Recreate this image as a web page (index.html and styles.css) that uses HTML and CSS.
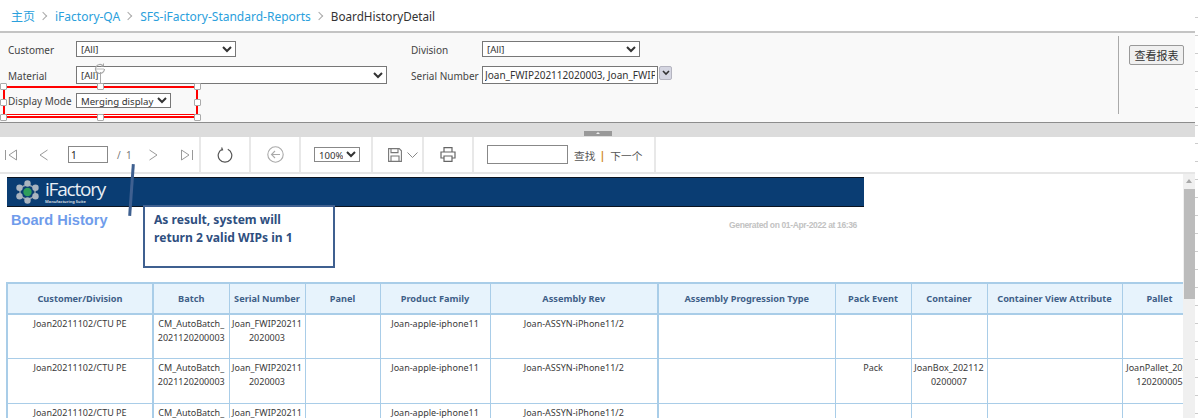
FILE: index.html
```html
<!DOCTYPE html>
<html lang="en">
<head>
    <meta charset="UTF-8">
    <meta name="viewport" content="width=device-width, initial-scale=1.0">
    <title>BoardHistoryDetail</title>
    <link rel="stylesheet" href="styles.css">
</head>
<body>
<div class="page">
    <nav class="breadcrumb">
        <a>主页</a><span class="crumb-sep"></span>
        <a>iFactory-QA</a><span class="crumb-sep"></span>
        <a>SFS-iFactory-Standard-Reports</a><span class="crumb-sep"></span>
        <span class="crumb-current">BoardHistoryDetail</span>
    </nav>

    <section class="params">
        <div class="param-grid">
            <label>Customer</label>
            <select class="sel-customer"><option>[All]</option></select>
            <label>Division</label>
            <select class="sel-division"><option>[All]</option></select>

            <label>Material</label>
            <select class="sel-material"><option>[All]</option></select>
            <label>Serial Number</label>
            <div class="serial">
                <input class="serial-input" type="text" readonly value="Joan_FWIP202112020003, Joan_FWIP202112020003">
                <span class="serial-btn">
                    <svg width="8" height="6" viewBox="0 0 8 6"><path d="M1 1l3 3 3-3" fill="none" stroke="#333" stroke-width="1.6"/></svg>
                </span>
            </div>

            <label>Display Mode</label>
            <select class="sel-mode"><option>Merging display</option></select>
        </div>
        <div class="view-area">
            <button class="view-btn" type="button">查看报表</button>
        </div>

        <!-- selected shape drawn over the screenshot -->
        <div class="select-box">
            <i class="handle h-tl"></i><i class="handle h-tm"></i><i class="handle h-tr"></i>
            <i class="handle h-ml"></i><i class="handle h-mr"></i>
            <i class="handle h-bl"></i><i class="handle h-bm"></i><i class="handle h-br"></i>
        </div>
        <svg class="rotate-handle" width="14" height="14" viewBox="0 0 14 14">
            <path d="M11.5 7a4.5 4.5 0 1 1-1.3-3.2" fill="none" stroke="#a8a8a8" stroke-width="1.2"/>
            <path d="M3 7h8" stroke="#bbb"/>
            <path d="M10.5 1.5v2.6H8" fill="none" stroke="#a8a8a8"/>
        </svg>
    </section>

    <div class="splitter"><span class="splitter-grip"></span></div>

    <div class="toolbar">
        <div class="tool-group tg-pages">
            <svg width="12" height="12" viewBox="0 0 12 12"><path d="M.5 1v10M11.5 1L4 6l7.5 5z" fill="none" stroke="#999"/></svg>
            <svg class="ic-prev" width="9" height="12" viewBox="0 0 9 12"><path d="M8.5 1L1 6l7.5 5" fill="none" stroke="#999"/></svg>
            <input class="page-input" type="text" value="1">
            <span class="page-total">/&nbsp;&nbsp;1</span>
            <svg class="ic-next" width="9" height="12" viewBox="0 0 9 12"><path d="M.5 1L8 6l-7.5 5" fill="none" stroke="#999"/></svg>
            <svg class="ic-last" width="12" height="12" viewBox="0 0 12 12"><path d="M11.5 1v10M.5 1L8 6l-7.5 5z" fill="none" stroke="#999"/></svg>
        </div>
        <div class="tool-group tg-refresh">
            <svg width="16" height="16" viewBox="0 0 16 16"><path d="M5.2 2.2a6.8 6.8 0 1 0 5.6 0M4.6 .6l.9 2.2-2.3.5" fill="none" stroke="#555" stroke-width="1.2"/></svg>
        </div>
        <div class="tool-group tg-back">
            <svg width="17" height="17" viewBox="0 0 17 17"><circle cx="8.5" cy="8.5" r="7.7" fill="none" stroke="#aaa" stroke-width="1.1"/><path d="M13 8.5H4.5M8 5L4.5 8.5 8 12" fill="none" stroke="#aaa" stroke-width="1.1"/></svg>
        </div>
        <div class="tool-group tg-zoom">
            <select class="zoom-select"><option>100%</option></select>
        </div>
        <div class="tool-group tg-save">
            <svg width="14" height="14" viewBox="0 0 14 14"><path d="M.6.6h10.6l2.2 2.2v10.6H.6zM3 .6v4h7v-4M3 13.4V8h8v5.4" fill="none" stroke="#777" stroke-width="1.1"/></svg>
            <svg width="11" height="6" viewBox="0 0 11 6"><path d="M.5.5l5 5 5-5" fill="none" stroke="#888"/></svg>
        </div>
        <div class="tool-group tg-print">
            <svg width="16" height="15" viewBox="0 0 16 15"><path d="M4 5V.7h8V5M4 11H1V5h14v6h-3M4 9h8v5.3H4z" fill="none" stroke="#666" stroke-width="1.2"/></svg>
        </div>
        <div class="tool-group tg-find">
            <input class="find-input" type="text">
            <a class="find-link">查找</a>
            <span class="find-sep">|</span>
            <a class="find-link">下一个</a>
        </div>
    </div>

    <div class="report">
        <div class="report-body">
            <div class="banner">
                <svg class="logo-mark" width="23" height="24" viewBox="0 0 23 24">
                    <path d="M11.5 4L4 8v8l7.5 4 7.5-4V8z" fill="none" stroke="#8f9dab" stroke-width="1.5"/>
                    <g fill="#a9b4bf">
                        <circle cx="11.5" cy="3.5" r="3.2"/><circle cx="11.5" cy="20.5" r="3.2"/>
                        <circle cx="3.5" cy="7.8" r="3.2"/><circle cx="19.5" cy="7.8" r="3.2"/>
                        <circle cx="3.5" cy="16.2" r="3.2"/><circle cx="19.5" cy="16.2" r="3.2"/>
                    </g>
                    <circle cx="11.5" cy="12" r="4.2" fill="#2f9e5b"/>
                </svg>
                <div class="logo-text">
                    <span class="logo-name">iFactory</span>
                    <span class="logo-sub">Manufacturing Suite</span>
                </div>
            </div>
            <div class="title-row">
                <span class="report-title">Board History</span>
                <span class="generated">Generated on 01-Apr-2022 at 16:36</span>
            </div>
            <table class="history">
                <colgroup>
                    <col class="c1"><col class="c2"><col class="c3"><col class="c4"><col class="c5"><col class="c6">
                    <col class="c7"><col class="c8"><col class="c9"><col class="c10"><col class="c11">
                </colgroup>
                <thead>
                    <tr>
                        <th>Customer/Division</th><th>Batch</th><th>Serial Number</th><th>Panel</th>
                        <th>Product Family</th><th>Assembly Rev</th><th>Assembly Progression Type</th>
                        <th>Pack Event</th><th>Container</th><th>Container View Attribute</th><th>Pallet</th>
                    </tr>
                </thead>
                <tbody>
                    <tr>
                        <td>Joan20211102/CTU PE</td><td>CM_AutoBatch_<br>2021120200003</td><td>Joan_FWIP20211<br>2020003</td><td></td>
                        <td>Joan-apple-iphone11</td><td>Joan-ASSYN-iPhone11/2</td><td></td>
                        <td></td><td></td><td></td><td></td>
                    </tr>
                    <tr>
                        <td>Joan20211102/CTU PE</td><td>CM_AutoBatch_<br>2021120200003</td><td>Joan_FWIP20211<br>2020003</td><td></td>
                        <td>Joan-apple-iphone11</td><td>Joan-ASSYN-iPhone11/2</td><td></td>
                        <td>Pack</td><td>JoanBox_202112<br>0200007</td><td></td><td>JoanPallet_2021<br>120200005</td>
                    </tr>
                    <tr>
                        <td>Joan20211102/CTU PE</td><td>CM_AutoBatch_<br>2021120200003</td><td>Joan_FWIP20211<br>2020003</td><td></td>
                        <td>Joan-apple-iphone11</td><td>Joan-ASSYN-iPhone11/2</td><td></td>
                        <td></td><td></td><td></td><td></td>
                    </tr>
                </tbody>
            </table>
        </div>
        <div class="scrollbar">
            <span class="scroll-up"></span>
            <span class="scroll-thumb"></span>
        </div>
    </div>

    <!-- annotation drawn over the screenshot -->
    <span class="note-line"></span>
    <div class="note">As result, system will<br>return 2 valid WIPs in 1</div>
</div>
<div class="edge-ticks"></div>
</body>
</html>
```

FILE: styles.css
```css
* {
    box-sizing: border-box;
}

html, body {
    margin: 0;
    height: 418px;
    overflow: hidden;
    background-color: #fff;
}

body {
    display: flex;
    font-family: "Noto Sans", "Noto Sans CJK SC", sans-serif;
    color: #333;
}

.page {
    position: relative;
    width: 1195px;
    height: 418px;
    display: flex;
    flex-direction: column;
    overflow: hidden;
}

.edge-ticks {
    width: 3px;
    height: 418px;
    background: repeating-linear-gradient(to bottom, transparent 0, transparent 17px, #ccc 17px, #ccc 18px);
}

/* breadcrumb */
.breadcrumb {
    height: 33px;
    flex: none;
    display: flex;
    align-items: center;
    padding: 1px 0 0 11px;
    border-bottom: 2px solid #c4c4c4;
    font-size: 12px;
    background-color: #fff;
}

.breadcrumb a {
    color: #2aa0dc;
}

.crumb-sep {
    width: 6px;
    height: 6px;
    margin: 0 9px 0 5px;
    border-top: 1px solid #aaa;
    border-right: 1px solid #aaa;
    transform: rotate(45deg);
}

.crumb-current {
    color: #333;
    font-size: 11.7px;
}

/* parameter panel */
.params {
    position: relative;
    height: 90px;
    flex: none;
    display: flex;
    justify-content: space-between;
    background-color: #f9f9f9;
    border-bottom: 1px solid #8c8c8c;
    font-size: 10px;
}

.param-grid {
    display: grid;
    grid-template-columns: 68px 335px 71px 260px;
    grid-template-rows: 16px 18px 15px;
    row-gap: 9px;
    padding: 8px 0 0 8px;
    align-items: center;
    justify-items: start;
}

.param-grid label {
    padding-top: 1px;
    color: #444;
    white-space: nowrap;
}

.param-grid select {
    height: 100%;
    font-family: inherit;
    font-size: 9.6px;
    color: #333;
    background-color: #fff;
    border: 1px solid #777;
    border-radius: 0;
    padding: 0;
}

.param-grid .sel-mode {
    grid-row: 3;
    grid-column: 2;
}

.sel-customer { width: 160px; }
.sel-material { width: 311px; }
.sel-division { width: 158px; }
.sel-mode { width: 95px; }

.serial {
    display: flex;
    align-items: flex-start;
    height: 18px;
}

.serial-input {
    width: 176px;
    height: 18px;
    padding: 0 2px;
    font-family: inherit;
    font-size: 10px;
    color: #333;
    background-color: #fff;
    border: 1px solid #777;
    outline: none;
}

.serial-btn {
    width: 13px;
    height: 14px;
    margin-left: 1px;
    display: flex;
    align-items: center;
    justify-content: center;
    background-color: #d5d6e2;
    border: 1px solid #b5b5c0;
    border-radius: 2px;
}

.view-area {
    width: 77px;
    height: 78px;
    margin: 3px 0 0;
    padding: 9px 0 0 10px;
    border-left: 1px solid #aaa;
}

.view-btn {
    width: 55px;
    height: 20px;
    padding: 0;
    font-family: inherit;
    font-size: 11px;
    color: #333;
    background-color: #f0f0f0;
    border: 1px solid #999;
    border-radius: 2px;
}

/* red rectangle + its handles */
.select-box {
    position: absolute;
    left: 3px;
    top: 53px;
    width: 195px;
    height: 32px;
    border: 2px solid #f00;
    box-shadow: inset 0 -1px 0 #fff, inset 0 -2px 0 #f00;
}

.select-box::before {
    content: "";
    position: absolute;
    left: 95px;
    top: -16px;
    width: 1px;
    height: 12px;
    background-color: #aaa;
}

.handle {
    position: absolute;
    width: 7px;
    height: 7px;
    background-color: #fff;
    border: 1px solid #aaa;
    border-radius: 1px;
}

.h-tl { left: -5px; top: -5px; }
.h-tm { left: 92px; top: -5px; }
.h-tr { right: -5px; top: -5px; }
.h-ml { left: -5px; top: 11px; }
.h-mr { right: -5px; top: 11px; }
.h-bl { left: -5px; bottom: -5px; }
.h-bm { left: 92px; bottom: -5px; }
.h-br { right: -5px; bottom: -5px; }

.rotate-handle {
    position: absolute;
    left: 93px;
    top: 29px;
}

/* splitter */
.splitter {
    height: 14px;
    flex: none;
    display: flex;
    justify-content: center;
    align-items: flex-end;
    padding: 0 0 1px 0;
    background-color: #dcdcdc;
}

.splitter-grip {
    width: 28px;
    height: 5px;
    display: flex;
    justify-content: center;
    padding-top: 1px;
    background-color: #999;
}

.splitter-grip::after {
    content: "";
    border-left: 2px solid transparent;
    border-right: 2px solid transparent;
    border-bottom: 2px solid #eee;
    height: 0;
}

/* toolbar */
.toolbar {
    height: 37px;
    flex: none;
    display: flex;
    border-bottom: 2px solid #e6e6e6;
    background-color: #fff;
}

.tool-group {
    height: 35px;
    display: flex;
    align-items: center;
    border-right: 2px solid #e8e8e8;
}

.tg-pages { width: 201px; padding-left: 5px; }
.ic-prev { margin-left: 22px; }
.page-input {
    width: 40px;
    height: 17px;
    margin-left: 20px;
    padding: 0 2px;
    font-family: inherit;
    font-size: 10px;
    color: #222;
    border: 1px solid #888;
    outline: none;
}
.page-total {
    margin-left: 9px;
    font-size: 10px;
    color: #777;
    white-space: nowrap;
}
.ic-next { margin-left: 17px; }
.ic-last { margin-left: 23px; }

.tg-refresh { width: 50px; justify-content: center; }
.tg-back { width: 50px; justify-content: center; }
.tg-zoom { width: 72px; padding-left: 13px; }
.zoom-select {
    width: 46px;
    height: 15px;
    padding: 0;
    font-family: inherit;
    font-size: 9.6px;
    color: #333;
    background-color: #fff;
    border: 1px solid #888;
    border-radius: 0;
}
.tg-save { width: 51px; padding-left: 15px; gap: 5px; }
.tg-print { width: 50px; justify-content: center; }
.tg-find { width: 182px; padding: 0 0 0 13px; font-size: 10.7px; }
.find-input {
    width: 81px;
    height: 19px;
    margin-right: 6px;
    border: 1px solid #888;
    outline: none;
}
.find-link { padding-top: 1px; color: #555; white-space: nowrap; }
.find-sep { margin: 0 5px 0 4px; font-weight: 700; color: #d28a1e; }

/* report */
.report {
    flex: 1;
    min-height: 0;
    display: flex;
}

.report-body {
    flex: 1;
    min-width: 0;
    overflow: hidden;
    padding: 3px 0 0 7px;
}

.banner {
    width: 857px;
    height: 30px;
    display: flex;
    align-items: center;
    padding-left: 9px;
    gap: 6px;
    background-color: #0a3d73;
    border-top: 1px solid #0b1420;
    border-bottom: 1px solid #0b1420;
}

.logo-text {
    display: flex;
    flex-direction: column;
    color: #e8eef4;
}

.logo-name {
    font-family: "Open Sans", sans-serif;
    font-size: 19px;
    line-height: 19px;
    letter-spacing: -1.2px;
}

.logo-sub {
    font-size: 4px;
    line-height: 5px;
    font-weight: 700;
    color: #c8d2dc;
}

.title-row {
    width: 850px;
    height: 75px;
    display: flex;
    justify-content: space-between;
    align-items: flex-start;
    padding-left: 4px;
}

.report-title {
    margin-top: 5px;
    font-family: "Liberation Sans", Arial, sans-serif;
    font-size: 14.6px;
    font-weight: 700;
    color: #6f9ceb;
}

.generated {
    margin-top: 13px;
    font-family: "Liberation Sans", Arial, sans-serif;
    font-size: 8.5px;
    font-weight: 700;
    letter-spacing: -0.36px;
    color: #c2c2c2;
    white-space: nowrap;
}

.history {
    width: 1190px;
    margin-left: -1px;
    table-layout: fixed;
    border-collapse: collapse;
    font-size: 9px;
    text-align: center;
    border-top: 2px solid #a9cde8;
    border-left: 2px solid #a9cde8;
}

.c1 { width: 146px; }
.c2 { width: 76px; }
.c3 { width: 76px; }
.c4 { width: 75px; }
.c5 { width: 110px; }
.c6 { width: 168px; }
.c7 { width: 177px; }
.c8 { width: 76px; }
.c9 { width: 76px; }
.c10 { width: 135px; }
.c11 { width: 75px; }

.history th {
    height: 31px;
    padding: 0;
    font-size: 9.2px;
    font-weight: 700;
    color: #3f5f88;
    background-color: #e7f3fc;
    border: 1px solid #a9cde8;
    border-bottom-width: 2px;
    white-space: nowrap;
}

.history td {
    height: 44.6px;
    padding: 2px 0 0;
    line-height: 13.5px;
    color: #3a3a3a;
    vertical-align: top;
    white-space: nowrap;
    overflow: hidden;
    border: 1px solid #a9cde8;
}

.history th:nth-child(1),
.history td:nth-child(1),
.history th:nth-child(6),
.history td:nth-child(6) {
    border-right-width: 2px;
}

.scrollbar {
    position: relative;
    width: 12px;
    flex: none;
    background-color: #f0f0f0;
}

.scroll-up {
    position: absolute;
    left: 3px;
    top: 5px;
    border-left: 3px solid transparent;
    border-right: 3px solid transparent;
    border-bottom: 4px solid #a8a8a8;
}

.scroll-thumb {
    position: absolute;
    left: 1px;
    right: 0;
    top: 15px;
    height: 110px;
    background-color: #bcbcbc;
}

/* callout */
.note-line {
    position: absolute;
    left: 130px;
    top: 164px;
    width: 3px;
    height: 52px;
    background-color: #3f6090;
    transform: rotate(4deg);
}

.note {
    position: absolute;
    left: 143px;
    top: 205px;
    width: 192px;
    height: 63px;
    padding: 4px 0 0 9px;
    font-size: 12.1px;
    font-weight: 700;
    line-height: 18px;
    color: #2f4f7f;
    background-color: #fff;
    border: 2.5px solid #3f6090;
}
```
